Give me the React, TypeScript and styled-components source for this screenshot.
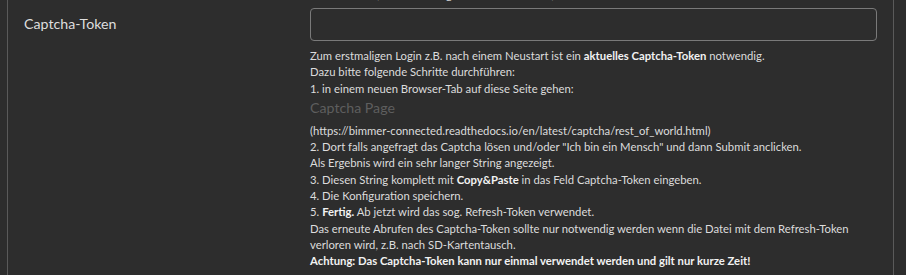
import styled, { createGlobalStyle } from "styled-components";

const Global = createGlobalStyle`
  html, body {
    margin: 0;
    padding: 0;
    background: #2d2d2d;
  }
  body {
    font-family: Lato, "Open Sans", sans-serif;
    color: #dcdcdc;
  }
`;

const Frame = styled.div`
  margin: 0 12px 0 7px;
  border-left: 1px solid #5a5a5a;
  border-right: 1px solid #5a5a5a;
  height: 275px;
  overflow: hidden;
`;

// tail of the previous field's help text, cut off by the top edge
const PrevHelp = styled.div`
  margin-left: 303px;
  height: 8px;
  overflow: hidden;
`;

const PrevLine = styled.div`
  font-size: 11.3px;
  line-height: 17px;
  margin-top: -14px;
  white-space: nowrap;
`;

const Row = styled.div`
  display: grid;
  grid-template-columns: 302px 1fr;
  padding-right: 16px;
`;

const Label = styled.div`
  padding: 7px 0 0 16px;
  font-size: 14.2px;
  color: #dedede;
`;

const Field = styled.div`
  display: flex;
  flex-direction: column;
`;

const Input = styled.input`
  box-sizing: border-box;
  height: 33px;
  width: 100%;
  background: transparent;
  border: 1px solid #7a7a7a;
  border-radius: 4px;
  color: #eee;
  font: inherit;
  outline: none;
`;

const Help = styled.div`
  margin-top: 7px;
  font-size: 11.3px;
  line-height: 16.3px;
  color: #dcdcdc;
  b {
    font-weight: 700;
    color: #f2f2f2;
  }
`;

const Warning = styled.b`
  display: block;
`;

const PageLink = styled.a`
  display: block;
  font-size: 14.2px;
  line-height: 22px;
  padding-bottom: 4px;
  color: #5e5e5e;
  text-decoration: none;
`;

export default function App() {
  return (
    <>
      <Global />
      <Frame>
        <PrevHelp>
          <PrevLine>Nur ausfüllen, wenn neu angemeldet werden soll, sonst leer lassen.</PrevLine>
        </PrevHelp>
        <Row>
          <Label>Captcha-Token</Label>
          <Field>
            <Input />
            <Help>
              Zum erstmaligen Login z.B. nach einem Neustart ist ein <b>aktuelles Captcha-Token</b> notwendig.
              <br />
              Dazu bitte folgende Schritte durchführen:
              <br />
              1. in einem neuen Browser-Tab auf diese Seite gehen:
              <PageLink href="#">Captcha Page</PageLink>
              (https://bimmer-connected.readthedocs.io/en/latest/captcha/rest_of_world.html)
              <br />
              2. Dort falls angefragt das Captcha lösen und/oder "Ich bin ein Mensch" und dann Submit anclicken.
              <br />
              Als Ergebnis wird ein sehr langer String angezeigt.
              <br />
              3. Diesen String komplett mit <b>Copy&amp;Paste</b> in das Feld Captcha-Token eingeben.
              <br />
              4. Die Konfiguration speichern.
              <br />
              5. <b>Fertig.</b> Ab jetzt wird das sog. Refresh-Token verwendet.
              <br />
              Das erneute Abrufen des Captcha-Token sollte nur notwendig werden wenn die Datei mit dem Refresh-Token verloren wird, z.B. nach SD-Kartentausch.
              <Warning>Achtung: Das Captcha-Token kann nur einmal verwendet werden und gilt nur kurze Zeit!</Warning>
            </Help>
          </Field>
        </Row>
      </Frame>
    </>
  );
}
